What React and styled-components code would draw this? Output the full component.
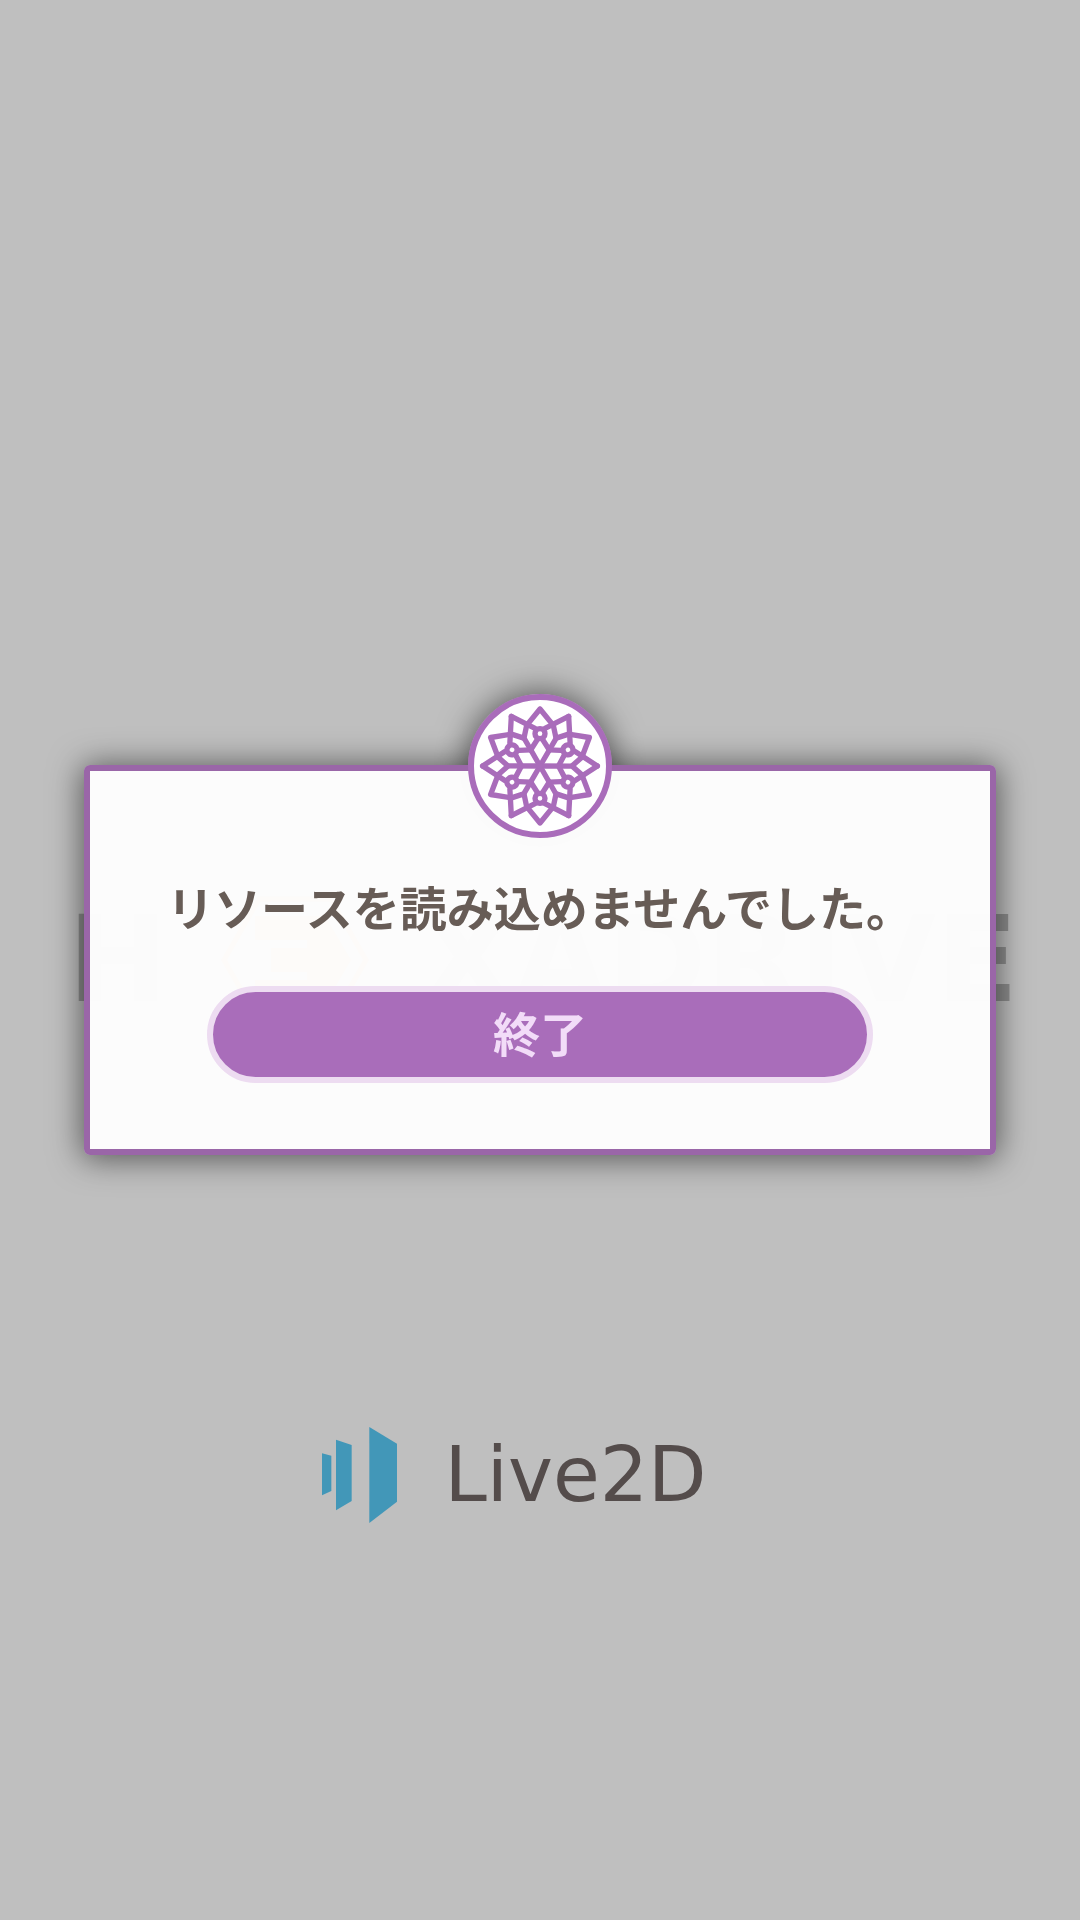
import React from "react";
import styled, { createGlobalStyle } from "styled-components";

const GlobalStyle = createGlobalStyle`
  * {
    box-sizing: border-box;
  }

  body {
    margin: 0;
    background-color: #bfbfbf;
    font-family: "Noto Sans CJK JP", "Noto Sans", sans-serif;
  }
`;

const Splash = styled.main`
  min-height: 100vh;
  display: grid;
  grid-template-rows: 1fr 140px 1fr;
  justify-items: center;
  align-items: center;
  overflow: hidden;
`;

const HexadriveLogo = styled.div`
  grid-row: 2;
  width: 88%;
  margin-left: 6px;
  display: flex;
  align-items: center;
  justify-content: space-between;
  color: #8e8e8e;
  font-family: "DejaVu Sans", sans-serif;
  font-size: 120px;
  font-weight: 700;
  line-height: 140px;
`;

const Hexagon = styled.svg`
  width: 148px;
  height: 128px;
`;

const Live2DLogo = styled.div`
  grid-row: 3;
  display: flex;
  align-items: center;
  gap: 48px;
`;

const Live2DMark = styled.svg`
  width: 75px;
  height: 96px;
`;

const Live2DName = styled.span`
  min-width: 314px;
  color: #544c4b;
  font-family: "DejaVu Sans", sans-serif;
  font-size: 76px;
  line-height: 96px;
`;

const Overlay = styled.div`
  position: fixed;
  inset: 0;
  display: flex;
  align-items: center;
  padding: 0 84px;
`;

const Dialog = styled.section`
  position: relative;
  flex: 1;
  display: flex;
  flex-direction: column;
  align-items: center;
  gap: 48px;
  padding: 103px 0 66px;
  border: 6px solid #9a66a8;
  border-radius: 6px;
  background-color: rgba(253, 253, 253, 0.98);
  box-shadow: 0 2px 32px 2px rgba(0, 0, 0, 0.55);

  /* badge shadow, kept behind the panel */
  &::before {
    content: "";
    position: absolute;
    z-index: -1;
    top: -5px;
    left: 50%;
    width: 144px;
    height: 144px;
    transform: translate(-50%, -50%);
    border-radius: 50%;
    box-shadow: 0 0 32px 2px rgba(0, 0, 0, 0.55);
  }
`;

const Badge = styled.div`
  position: absolute;
  top: -5px;
  left: 50%;
  width: 144px;
  height: 144px;
  transform: translate(-50%, -50%);
  border: 6px solid #a96cba;
  border-radius: 50%;
  background-color: #fff;

  svg {
    display: block;
    width: 132px;
    height: 132px;
  }
`;

const Message = styled.p`
  margin: 0;
  color: #675c56;
  font-size: 47px;
  font-weight: 700;
  line-height: 64px;
  text-align: center;
`;

const Button = styled.button`
  width: 74%;
  height: 97px;
  padding: 0 0 6px;
  border: 6px solid #eddcf1;
  border-radius: 49px;
  background-color: #a96dba;
  color: #f2dcf8;
  font-family: inherit;
  font-size: 47px;
  font-weight: 700;
  line-height: 64px;
  cursor: pointer;
`;

const angles = [0, 60, 120, 180, 240, 300];

const Flower = () => (
  <svg viewBox="-198 -198 396 396" aria-hidden="true">
    <g
      fill="none"
      stroke="#a96cba"
      strokeWidth="16"
      strokeLinejoin="round"
      strokeLinecap="round"
    >
      {angles.map((angle) => (
        <g key={angle} transform={`rotate(${angle})`}>
          <path d="M0 -171 L-40 -122 L-48 -84 L0 0 M0 -171 L40 -122 L48 -84" />
          <path d="M-28 -48 L0 -92 L28 -48" />
          <path d="M-15 -113 L-86 -149 M15 -113 L86 -149" />
        </g>
      ))}
      {angles.map((angle) => (
        <circle
          key={angle}
          cy="-97"
          r="15"
          fill="#fff"
          transform={`rotate(${angle})`}
        />
      ))}
    </g>
  </svg>
);

const App = () => {
  return (
    <>
      <GlobalStyle />
      <Splash>
        <HexadriveLogo>
          <span>H</span>
          <Hexagon viewBox="0 0 148 128" aria-hidden="true">
            <path
              d="M38 3 H110 L145 64 L110 125 H38 L3 64 Z"
              fill="none"
              stroke="#e0962c"
              strokeWidth="5"
            />
            <path
              d="M34 20 H104 L130 64 L104 108 H34 V84 H86 V76 H50 V52 H86 V44 H34 Z"
              fill="#e0962c"
            />
          </Hexagon>
          <span>XADRIVE</span>
        </HexadriveLogo>
        <Live2DLogo>
          <Live2DMark viewBox="66 53 225 288" aria-hidden="true">
            <g fill="#4297b8">
              <path d="M66 132 L94 139 V245 L66 258 Z" />
              <path d="M108 91 L155 107 V275 L108 303 Z" />
              <path d="M208 53 L291 103 V277 L208 341 Z" />
            </g>
          </Live2DMark>
          <Live2DName>Live2D</Live2DName>
        </Live2DLogo>
      </Splash>
      <Overlay>
        <Dialog role="alertdialog" aria-modal="true" aria-describedby="message">
          <Badge>
            <Flower />
          </Badge>
          <Message id="message">リソースを読み込めませんでした。</Message>
          <Button type="button">終了</Button>
        </Dialog>
      </Overlay>
    </>
  );
};

export default App;
